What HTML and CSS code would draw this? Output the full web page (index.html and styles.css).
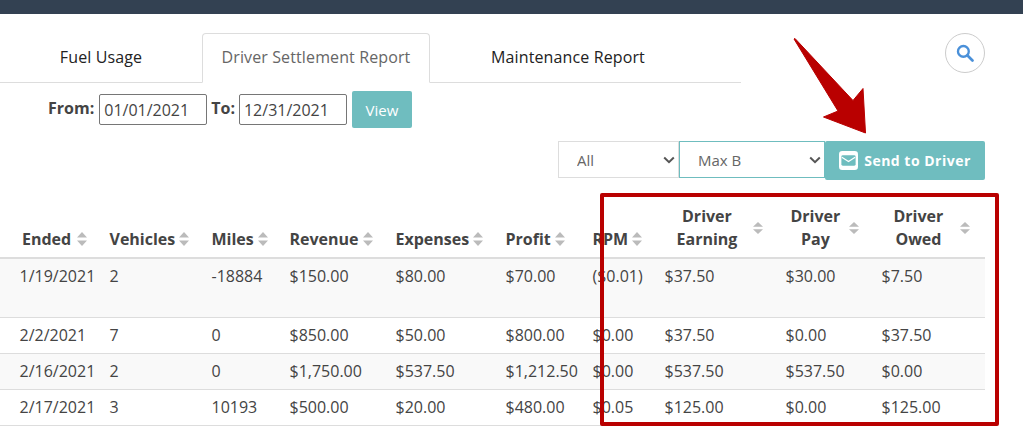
FILE: index.html
```html
<!DOCTYPE html>
<html lang="en">
<head>
<meta charset="utf-8">
<title>Driver Settlement Report</title>
<link rel="stylesheet" href="styles.css">
</head>
<body>
<div class="topbar"></div>
<main class="page">
  <div class="top-row">
    <nav class="tabs">
      <a class="tab tab-fuel">Fuel Usage</a>
      <a class="tab tab-active">Driver Settlement Report</a>
      <a class="tab tab-maint">Maintenance Report</a>
    </nav>
    <button class="search" aria-label="Search">
      <svg width="18" height="18" viewBox="0 0 20 20"><circle cx="8.2" cy="8.2" r="6" fill="none" stroke="#4a90d9" stroke-width="2.600"/><path d="M12.800 12.800L18.300 18.300" stroke="#4a90d9" stroke-width="3" stroke-linecap="round"/></svg>
    </button>
  </div>
  <form class="dates">
    <label class="date-label date-from">From:</label>
    <input class="date-input" value="01/01/2021">
    <label class="date-label">To:</label>
    <input class="date-input" value="12/31/2021">
    <button type="button" class="view-btn">View</button>
  </form>
  <div class="filters">
    <div class="sel-wrap">
      <select class="sel sel-all"><option>All</option></select>
      <svg class="chev chev-all" width="12" height="8" viewBox="0 0 12 8"><path d="M1.200 1.500L6 6.200l4.800-4.700" fill="none" stroke="#555" stroke-width="2"/></svg>
    </div>
    <div class="sel-wrap">
      <select class="sel sel-driver"><option>Max B</option></select>
      <svg class="chev chev-driver" width="12" height="8" viewBox="0 0 12 8"><path d="M1.200 1.500L6 6.200l4.800-4.700" fill="none" stroke="#555" stroke-width="2"/></svg>
    </div>
    <button type="button" class="send-btn">
      <svg width="19" height="19" viewBox="0 0 20 20"><rect width="20" height="20" rx="3.5" fill="#fff"/><rect x="2.500" y="4.500" width="15" height="11" rx="1.500" fill="#6fbdbf"/><path d="M3 6.500L10 11l7-4.500" fill="none" stroke="#fff" stroke-width="1.300"/></svg>
      Send to Driver
    </button>
  </div>
  <table class="report">
    <colgroup>
      <col class="c1"><col class="c2"><col class="c3"><col class="c4"><col class="c5">
      <col class="c6"><col class="c7"><col class="c8"><col class="c9"><col class="c10">
    </colgroup>
    <thead>
      <tr>
        <th class="th-first"><span class="h h-ended">Ended<svg class="sort" viewBox="0 0 10 14" preserveAspectRatio="none"><path d="M5 0l5 5.500H0zM5 14L0 8.500h10z"/></svg></span></th>
        <th><span class="h">Vehicles<svg class="sort" viewBox="0 0 10 14" preserveAspectRatio="none"><path d="M5 0l5 5.500H0zM5 14L0 8.500h10z"/></svg></span></th>
        <th><span class="h">Miles<svg class="sort" viewBox="0 0 10 14" preserveAspectRatio="none"><path d="M5 0l5 5.500H0zM5 14L0 8.500h10z"/></svg></span></th>
        <th><span class="h">Revenue<svg class="sort" viewBox="0 0 10 14" preserveAspectRatio="none"><path d="M5 0l5 5.500H0zM5 14L0 8.500h10z"/></svg></span></th>
        <th><span class="h">Expenses<svg class="sort" viewBox="0 0 10 14" preserveAspectRatio="none"><path d="M5 0l5 5.500H0zM5 14L0 8.500h10z"/></svg></span></th>
        <th><span class="h">Profit<svg class="sort" viewBox="0 0 10 14" preserveAspectRatio="none"><path d="M5 0l5 5.500H0zM5 14L0 8.500h10z"/></svg></span></th>
        <th><span class="h">RPM<svg class="sort" viewBox="0 0 10 14" preserveAspectRatio="none"><path d="M5 0l5 5.500H0zM5 14L0 8.500h10z"/></svg></span></th>
        <th><span class="h h-wrap h-earning"><span class="two">Driver<br>Earning</span><svg class="sort" viewBox="0 0 10 14" preserveAspectRatio="none"><path d="M5 0l5 5.500H0zM5 14L0 8.500h10z"/></svg></span></th>
        <th><span class="h h-wrap h-pay"><span class="two">Driver<br>Pay</span><svg class="sort" viewBox="0 0 10 14" preserveAspectRatio="none"><path d="M5 0l5 5.500H0zM5 14L0 8.500h10z"/></svg></span></th>
        <th><span class="h h-wrap h-owed"><span class="two">Driver<br>Owed</span><svg class="sort" viewBox="0 0 10 14" preserveAspectRatio="none"><path d="M5 0l5 5.500H0zM5 14L0 8.500h10z"/></svg></span></th>
      </tr>
    </thead>
    <tbody>
      <tr class="row-tall"><td class="td-first">1/19/2021<br>&nbsp;</td><td>2</td><td>-18884</td><td>$150.00</td><td>$80.00</td><td>$70.00</td><td>($0.01)</td><td>$37.50</td><td>$30.00</td><td>$7.50</td></tr>
      <tr><td class="td-first">2/2/2021</td><td>7</td><td>0</td><td>$850.00</td><td>$50.00</td><td>$800.00</td><td>$0.00</td><td>$37.50</td><td>$0.00</td><td>$37.50</td></tr>
      <tr><td class="td-first">2/16/2021</td><td>2</td><td>0</td><td>$1,750.00</td><td>$537.50</td><td>$1,212.50</td><td>$0.00</td><td>$537.50</td><td>$537.50</td><td>$0.00</td></tr>
      <tr><td class="td-first">2/17/2021</td><td>3</td><td>10193</td><td>$500.00</td><td>$20.00</td><td>$480.00</td><td>$0.05</td><td>$125.00</td><td>$0.00</td><td>$125.00</td></tr>
    </tbody>
  </table>
</main>
<div class="red-box"></div>
<svg class="red-arrow" width="80" height="105" viewBox="790 34 80 105"><path d="M795 38.500L853 100.500 863 88.500 865.500 133 823.500 117 838 111 794 39z" fill="#b90000" stroke="#b90000" stroke-width="1" stroke-linejoin="round"/></svg>
</body>
</html>
```
FILE: styles.css
```css
* { box-sizing: border-box; }
html, body { margin: 0; height: 426px; overflow: hidden; }
body {
  position: relative;
  font-family: "Open Sans", sans-serif;
  font-size: 16px;
  line-height: 1.42857;
  color: #444;
  background: #fff;
}
.topbar { height: 14px; background: #334152; }
.top-row {
  display: flex;
  justify-content: space-between;
  align-items: flex-start;
  padding: 19px 38px 0 0;
}
.tabs {
  display: flex;
  width: 741px;
  height: 50px;
  border-bottom: 1px solid #ddd;
}
.tab {
  display: flex;
  align-items: center;
  justify-content: center;
  height: 50px;
  padding-bottom: 2px;
  letter-spacing: .12px;
  color: #222;
}
.tab-fuel { width: 202px; }
.tab-active {
  width: 228px;
  color: #666;
  background: #fff;
  border: 1px solid #ddd;
  border-bottom-color: #fff;
  border-radius: 4px 4px 0 0;
}
.tab-maint { width: 276px; }
.search {
  width: 40px;
  height: 40px;
  padding: 0;
  display: flex;
  align-items: center;
  justify-content: center;
  background: #fff;
  border: 1px solid #ccc;
  border-radius: 50%;
}
.dates {
  display: flex;
  align-items: center;
  height: 37px;
  margin-top: 8px;
  padding-left: 48px;
}
.date-label { font-weight: 700; margin-right: 4px; margin-top: -2px; }
.date-from { margin-right: 5px; }
.date-input {
  width: 108px;
  height: 31px;
  padding: 0 4px;
  margin-right: 4px;
  font: 16px "Open Sans", sans-serif;
  color: #444;
  border: 1px solid #767676;
  border-radius: 2px;
}
.view-btn {
  width: 60px;
  height: 37px;
  margin-left: 1px;
  padding: 0;
  font: 15px "Open Sans", sans-serif;
  color: #fff;
  background: #6fbdbf;
  border: 0;
  border-radius: 2px;
}
.filters {
  display: flex;
  justify-content: flex-end;
  align-items: flex-start;
  margin-top: 13px;
  padding-right: 38px;
}
.sel-wrap { position: relative; display: flex; }
.sel {
  appearance: none;
  height: 37px;
  padding: 0 18px;
  font: 15px "Open Sans", sans-serif;
  color: #666;
  background: #fff;
  border: 1px solid #ddd;
  border-radius: 0;
}
.sel-all { width: 121px; }
.sel-driver { width: 146px; border-color: #6fbdbf; }
.chev { position: absolute; top: 15px; pointer-events: none; }
.chev-all { left: 105px; }
.chev-driver { left: 130px; }
.send-btn {
  display: flex;
  align-items: center;
  justify-content: center;
  gap: 6px;
  width: 160px;
  height: 39px;
  padding: 0;
  font: 700 14px "Open Sans", sans-serif;
  letter-spacing: .5px;
  color: #fff;
  background: #6fbdbf;
  border: 0;
  border-radius: 2px;
}
.report {
  width: 985px;
  margin-top: 19px;
  table-layout: fixed;
  border-collapse: collapse;
}
.c1 { width: 100px; }
.c2 { width: 102px; }
.c3 { width: 78px; }
.c4 { width: 106px; }
.c5 { width: 110px; }
.c6 { width: 87px; }
.c7 { width: 72px; }
.c8 { width: 121px; }
.c9 { width: 96px; }
.c10 { width: 113px; }
.report th {
  padding: 6px 0 6px 10px;
  text-align: left;
  vertical-align: bottom;
  font-weight: 700;
  border-bottom: 2px solid #ddd;
  white-space: nowrap;
}
.report .th-first { padding-left: 22px; }
.h { display: flex; align-items: center; gap: 4px; margin-left: -.5px; }
.h-ended { gap: 6px; margin-left: 0; }
.h-wrap { gap: 0; }
.two { display: block; text-align: center; }
.h-earning { padding-left: 12px; }
.h-earning .sort { margin-left: 16px; }
.h-pay { padding-left: 5px; }
.h-pay .sort { margin-left: 9px; }
.h-owed { padding-left: 12px; }
.h-owed .sort { margin-left: 17px; }
.sort { width: 10px; height: 14px; flex: none; fill: #bbb; }
.h-wrap .sort { height: 12px; }
.report td {
  padding: 6px 0 6px 9.5px;
  vertical-align: top;
  border-bottom: 1px solid #ddd;
  white-space: nowrap;
}
.report .td-first { padding-left: 19.5px; }
.report .row-tall td { padding-bottom: 7px; }
.report tbody tr:nth-child(odd) { background: #f9f9f9; }
.red-box {
  position: absolute;
  left: 600px;
  top: 193px;
  width: 399px;
  height: 233px;
  border: 4px solid #b90000;
  border-radius: 2px;
}
.red-arrow { position: absolute; left: 790px; top: 34px; }
```
